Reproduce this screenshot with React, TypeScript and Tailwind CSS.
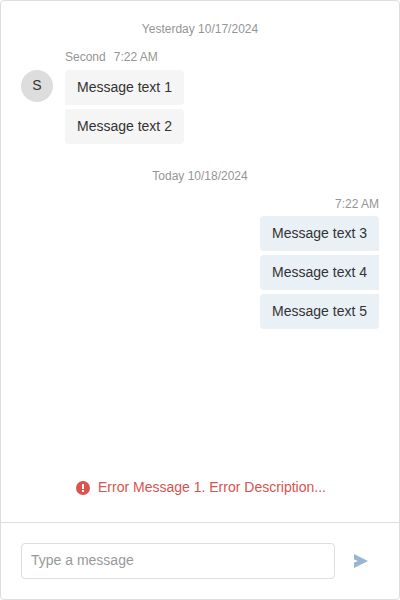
import React from "react";

type BubbleProps = { text: string; own?: boolean; corners: string };

function Bubble({ text, own, corners }: BubbleProps) {
  return (
    <div className={`h-[35px] px-3 py-2 text-[14px] leading-[19px] text-[#333] ${own ? "bg-[#e9f0f6]" : "bg-[#f5f5f5]"} ${corners}`}>
      {text}
    </div>
  );
}

export default function App() {
  return (
    <main className="flex h-[600px] w-[400px] flex-col rounded-[4px] border border-[#ddd] bg-white font-['Liberation_Sans',Arial,sans-serif]">
      <section className="flex flex-1 flex-col px-5 pt-5">
        <div className="h-4 text-center text-[12px] leading-4 text-[#959595]">Yesterday 10/17/2024</div>
        <div className="mt-3 flex h-4 gap-2 pl-11 text-[12px] leading-4 text-[#959595]">
          <span>Second</span>
          <span>7:22 AM</span>
        </div>
        <div className="mt-[5px] flex items-start gap-3">
          <div className="h-8 w-8 rounded-full bg-[#ddd] text-center text-[14px] leading-[31px] text-[#333]">S</div>
          <div className="flex flex-col gap-1">
            <Bubble text="Message text 1" corners="rounded-[4px] rounded-bl-none" />
            <Bubble text="Message text 2" corners="rounded-[4px] rounded-tl-none" />
          </div>
        </div>
        <div className="mt-6 h-4 text-center text-[12px] leading-4 text-[#959595]">Today 10/18/2024</div>
        <div className="mt-3 h-4 text-right text-[12px] leading-4 text-[#959595]">7:22 AM</div>
        <div className="mt-1 flex flex-col gap-1 self-end">
          <Bubble text="Message text 3" corners="rounded-[4px] rounded-br-none" own />
          <Bubble text="Message text 4" corners="rounded-l-[4px]" own />
          <Bubble text="Message text 5" corners="rounded-[4px] rounded-tr-none" own />
        </div>
        <div className="mt-auto mb-[25px] flex h-[19px] items-start justify-center gap-2 pl-[2px] text-[14px] leading-[19px] text-[#d9534f]">
          <svg className="mt-[3px] h-[14px] w-[14px]" viewBox="0 0 14 14">
            <circle cx="7" cy="7" r="7" fill="#d9534f" />
            <path d="M6 3h2v5H6zM6 9h2v2H6z" fill="white" />
          </svg>
          <span>Error Message 1. Error Description...</span>
        </div>
      </section>
      <form className="flex h-[77px] items-center border-t border-[#ddd] pr-5 pl-5">
        <input
          className="h-9 w-[314px] rounded-[4px] border border-[#ddd] px-[9px] pb-[2px] text-[14px] placeholder:text-[#999] outline-none"
          placeholder="Type a message"
        />
        <button type="button" aria-label="Send" className="ml-2 flex h-9 w-9 items-center justify-center">
          <svg className="h-[18px] w-[18px]" viewBox="0 0 18 18">
            <path d="M2 2l14 7-14 7v-5.5L6 9 2 7.5z" fill="#99b5d1" />
          </svg>
        </button>
      </form>
    </main>
  );
}
